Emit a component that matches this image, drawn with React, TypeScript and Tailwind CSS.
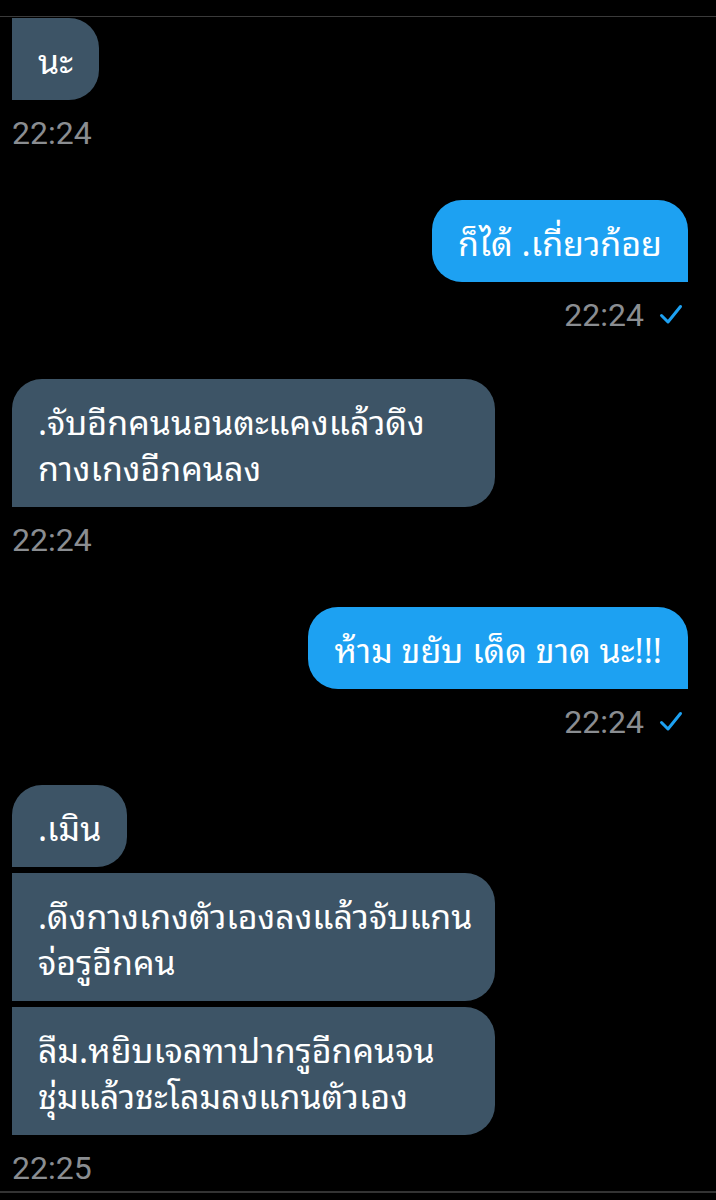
import type { ReactNode } from "react";

type Msg = {
  from: "me" | "them";
  lines: string[];
  wide?: boolean;
  corner?: string;
};

const thai = {
  fontFamily:
    '"Noto Sans Thai Looped", "Noto Sans Thai UI", "Noto Sans Thai", "Noto Sans", "Liberation Sans", sans-serif',
};
const roboto = { fontFamily: 'Roboto, "Liberation Sans", sans-serif' };

function Check() {
  return (
    <svg width="24" height="22" viewBox="0 0 24 22" fill="none" className="ml-[15px]">
      <path
        d="M2.5 11.5l6.5 6.5L21.5 2.5"
        stroke="#1da1f2"
        strokeWidth="3"
        strokeLinecap="round"
        strokeLinejoin="round"
      />
    </svg>
  );
}

function Bubble({ msg }: { msg: Msg }) {
  const mine = msg.from === "me";
  return (
    <div
      style={thai}
      className={
        (mine ? "bg-[#1da1f2] self-end " : "bg-[#3d5466] self-start ") +
        (msg.wide ? "w-[483px] " : "") +
        (msg.corner ?? "") +
        " px-[26px] py-[18px] text-[34px] leading-[46px] text-white whitespace-nowrap"
      }
    >
      {msg.lines.map((l, i) => (
        <div key={i}>{l}</div>
      ))}
    </div>
  );
}

function Stamp({ time, mine }: { time: string; mine?: boolean }) {
  return (
    <div
      style={roboto}
      className={
        "mt-[14px] flex h-[38px] items-center text-[32px] text-[#8a8d91] " +
        (mine ? "justify-end pr-[5px]" : "justify-start")
      }
    >
      <span>{time}</span>
      {mine ? <Check /> : null}
    </div>
  );
}

function Group({ children, className }: { children: ReactNode; className?: string }) {
  return <div className={"flex flex-col " + (className ?? "")}>{children}</div>;
}

export default function App() {
  return (
    <div className="flex h-[1200px] w-[716px] flex-col overflow-hidden bg-black">
      <div className="mt-[16px] h-px w-full bg-[#3a3a3a]" />

      <div className="flex flex-1 flex-col px-[12px] pr-[28px]">
        <Group className="mt-px mb-[48px]">
          <Bubble msg={{ from: "them", lines: ["นะ"], corner: "rounded-r-[30px]" }} />
          <Stamp time="22:24" />
        </Group>

        <Group className="mb-[45px]">
          <Bubble
            msg={{ from: "me", lines: ["ก็ได้ .เกี่ยวก้อย"], corner: "rounded-[30px] rounded-br-none" }}
          />
          <Stamp time="22:24" mine />
        </Group>

        <Group className="mb-[48px]">
          <Bubble
            msg={{
              from: "them",
              wide: true,
              lines: [".จับอีกคนนอนตะแคงแล้วดึง", "กางเกงอีกคนลง"],
              corner: "rounded-[30px] rounded-bl-none",
            }}
          />
          <Stamp time="22:24" />
        </Group>

        <Group className="mb-[44px]">
          <Bubble
            msg={{ from: "me", lines: ["ห้าม ขยับ เด็ด ขาด นะ!!!"], corner: "rounded-[30px] rounded-br-none" }}
          />
          <Stamp time="22:24" mine />
        </Group>

        <Group className="gap-[6px]">
          <Bubble msg={{ from: "them", lines: [".เมิน"], corner: "rounded-[30px] rounded-bl-none" }} />
          <Bubble
            msg={{
              from: "them",
              wide: true,
              lines: [".ดึงกางเกงตัวเองลงแล้วจับแกน", "จ่อรูอีกคน"],
              corner: "rounded-r-[30px]",
            }}
          />
          <Bubble
            msg={{
              from: "them",
              wide: true,
              lines: ["ลืม.หยิบเจลทาปากรูอีกคนจน", "ชุ่มแล้วชะโลมลงแกนตัวเอง"],
              corner: "rounded-r-[30px]",
            }}
          />
        </Group>
        <Stamp time="22:25" />
      </div>

      <div className="mb-[7px] h-[2px] w-full bg-[#333333]" />
    </div>
  );
}
